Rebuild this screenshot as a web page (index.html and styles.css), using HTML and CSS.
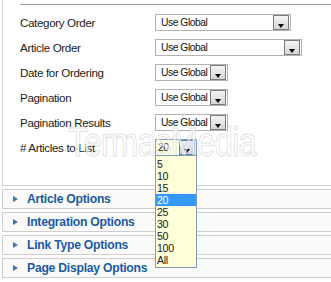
FILE: index.html
```html
<!DOCTYPE html>
<html>
<head>
<meta charset="utf-8">
<link rel="stylesheet" href="styles.css">
</head>
<body>
<div class="page">
  <div class="panel">
    <div class="rule"></div>
    <div class="rows">
      <div class="row"><span class="label">Category Order</span><div class="sel w135"><span class="val">Use Global</span><span class="btn"></span></div></div>
      <div class="row"><span class="label">Article Order</span><div class="sel w146"><span class="val">Use Global</span><span class="btn"></span></div></div>
      <div class="row"><span class="label">Date for Ordering</span><div class="sel w72"><span class="val">Use Global</span><span class="btn"></span></div></div>
      <div class="row"><span class="label">Pagination</span><div class="sel w72"><span class="val">Use Global</span><span class="btn"></span></div></div>
      <div class="row"><span class="label">Pagination Results</span><div class="sel w72"><span class="val">Use Global</span><span class="btn"></span></div></div>
      <div class="row"><span class="label"># Articles to List</span>
        <div class="sel w41 focus"><span class="val">20</span><span class="btn"></span>
          <ul class="list">
            <li>5</li><li>10</li><li>15</li><li class="on">20</li><li>25</li><li>30</li><li>50</li><li>100</li><li>All</li>
          </ul>
        </div>
      </div>
    </div>
  </div>
  <div class="bars">
    <div class="bar"><span class="tri"></span>Article Options</div>
    <div class="bar"><span class="tri"></span>Integration Options</div>
    <div class="bar"><span class="tri"></span>Link Type Options</div>
    <div class="bar"><span class="tri"></span>Page Display Options</div>
  </div>
  <div class="mark" aria-hidden="true">TermasMedia</div>
</div>
</body>
</html>
```
FILE: styles.css
```css
html, body { margin: 0; padding: 0; background: #ffffff; }
body { font-family: "Liberation Sans", Arial, sans-serif; width: 331px; height: 282px; overflow: hidden; }
.page { position: relative; }
.panel {
  margin-left: 2px;
  margin-right: -4px;
  border-left: 1px solid #d4d4d4;
  border-bottom: 1px solid #d4d4d4;
  padding: 4px 0 25px 17px;
  background: #fff;
}
.rule { border-top: 1px solid #a3a3a3; }
.rows { margin-top: 5px; }
.row { display: flex; align-items: center; height: 25px; }
.label { width: 135px; font-size: 11.6px; color: #222; letter-spacing: -0.35px; }
.sel {
  position: relative;
  box-sizing: border-box;
  height: 17px;
  border: 1px solid #b2b2b2;
  background: #fff;
  display: flex;
  align-items: center;
  justify-content: space-between;
  padding: 0 1px 0 5px;
}
.w135 { width: 136px; }
.w146 { width: 147px; }
.w72 { width: 73px; }
.w41 { width: 42px; padding-left: 2px; }
.val { font-size: 10.3px; color: #111; letter-spacing: -0.45px; white-space: nowrap; }
.btn {
  position: relative;
  box-sizing: border-box;
  width: 16px;
  height: 15px;
  border: 1px solid #7a7a7a;
  background: linear-gradient(#f4f4f4, #d6d6d6);
}
.btn::after {
  content: "";
  position: absolute;
  left: 4px;
  top: 8px;
  border-left: 3.5px solid transparent;
  border-right: 3.5px solid transparent;
  border-top: 4px solid #000;
}
.focus { border-color: #7f9db9; background: #ffffe6; }
.focus .btn { border-color: #5c7fb5; background: linear-gradient(#eaf0f8, #c9d6ea); }
.list {
  position: absolute;
  left: -1px;
  top: 15px;
  width: 42px;
  box-sizing: border-box;
  margin: 0;
  padding: 2px 0 1px;
  list-style: none;
  background: #ffffd9;
  border: 1px solid #7f9db9;
  z-index: 5;
}
.list li { height: 12px; line-height: 12px; font-size: 10.6px; padding-left: 1px; color: #222; letter-spacing: -0.3px; }
.list li.on { background: #3399ff; color: #fff; }
.bars { margin-left: 2px; margin-right: -4px; padding-top: 3px; }
.bar {
  display: flex;
  align-items: center;
  box-sizing: border-box;
  height: 20px;
  margin-bottom: 3px;
  border: 1px solid #cfcfcf;
  background: #fafafa;
  font-size: 12.2px;
  font-weight: bold;
  color: #1b5aa5;
  letter-spacing: -0.25px;
  padding-left: 10px;
}
.tri {
  width: 0; height: 0;
  border-top: 3.5px solid transparent;
  border-bottom: 3.5px solid transparent;
  border-left: 5px solid #3b78b8;
  margin-right: 9px;
}
.mark {
  position: absolute;
  left: 68px;
  top: 127px;
  font-size: 40px;
  line-height: 30px;
  font-family: "Liberation Sans", Arial, sans-serif;
  transform: scaleX(0.82);
  transform-origin: left top;
  color: rgba(255,255,255,0.6);
  -webkit-text-stroke: 1px rgba(175,175,175,0.4);
  letter-spacing: -1px;
  pointer-events: none;
  z-index: 3;
}
```
